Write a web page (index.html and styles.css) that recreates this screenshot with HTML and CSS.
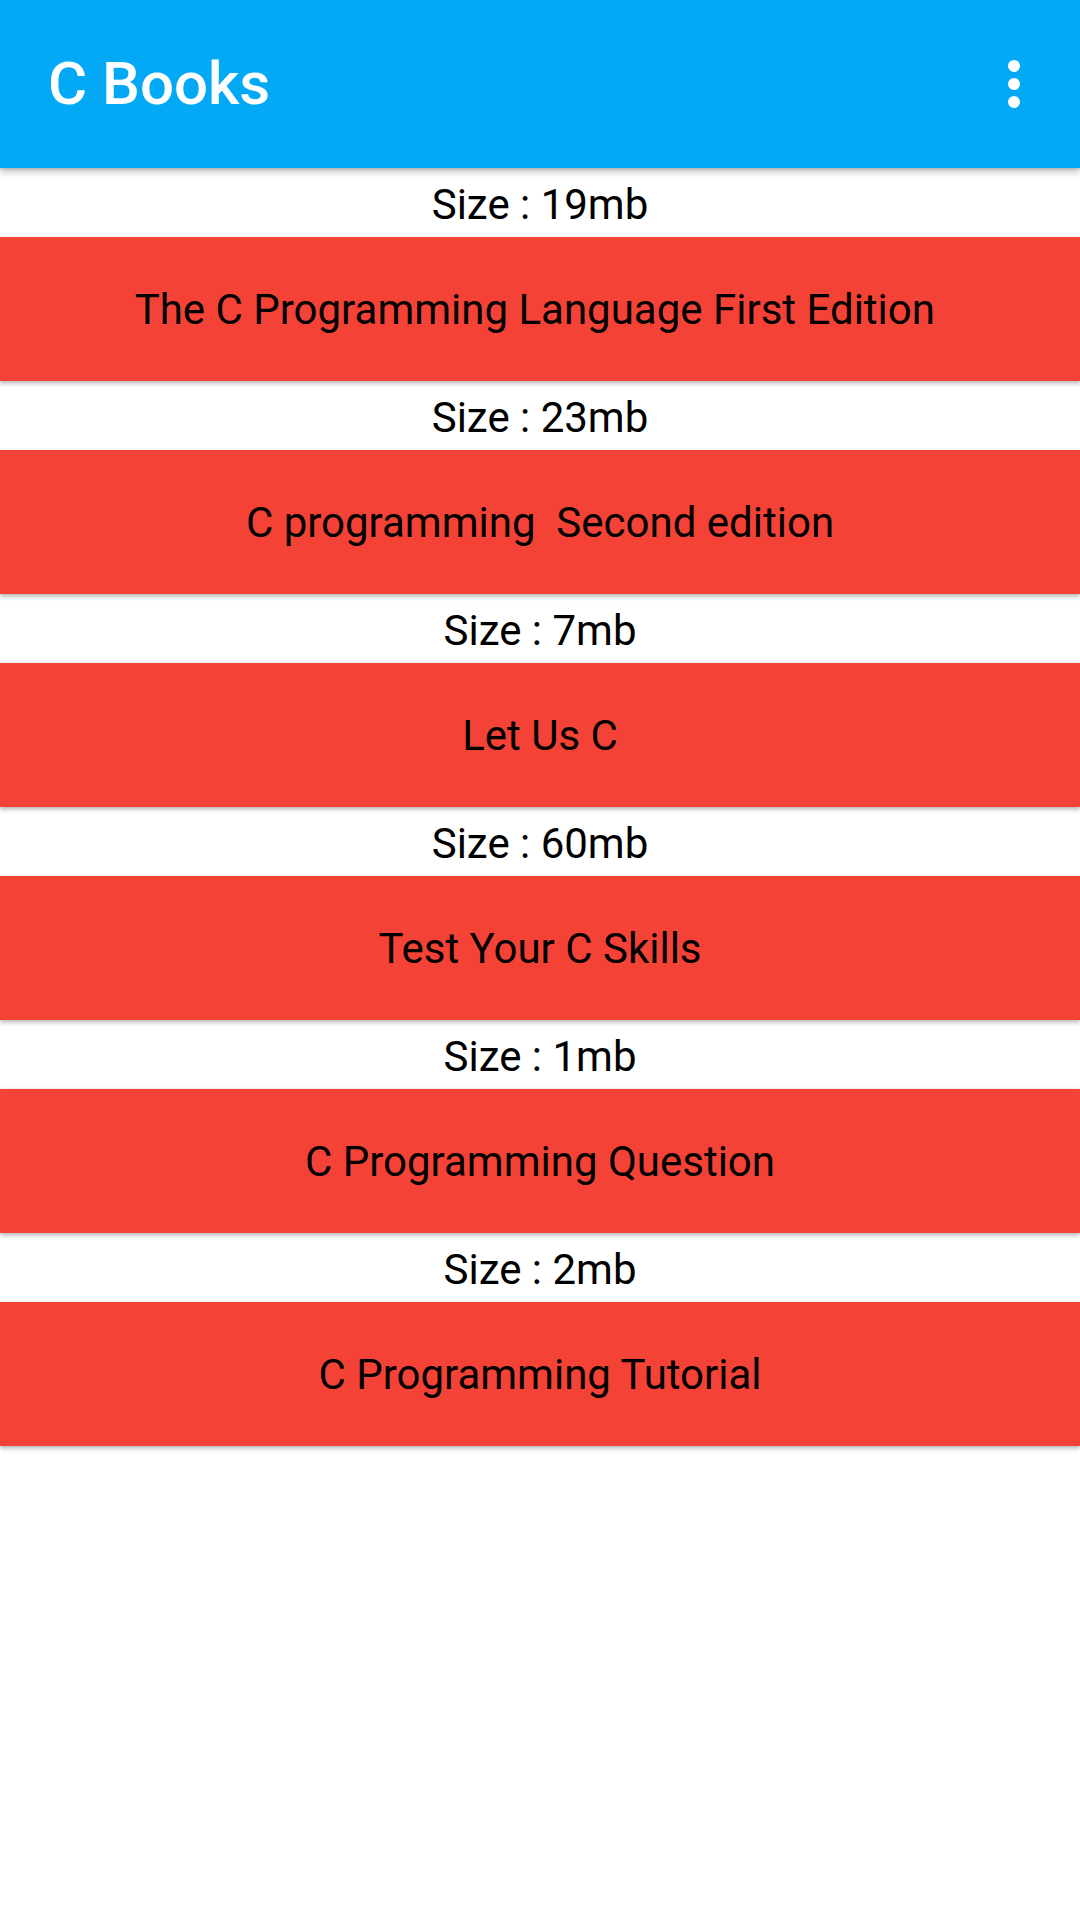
FILE: index.html
```html
<!DOCTYPE html>
<html>
<head>
<meta charset="utf-8">
<link rel="stylesheet" href="styles.css">
</head>
<body>
<header class="appbar">
  <div class="title">C Books</div>
  <svg class="overflow" width="72" height="72" viewBox="0 0 24 24"><circle cx="12" cy="6" r="2" fill="#fff"/><circle cx="12" cy="12" r="2" fill="#fff"/><circle cx="12" cy="18" r="2" fill="#fff"/></svg>
</header>
<main class="list">
  <div class="size">Size : 19mb</div>
  <div class="book">The C Programming Language First Edition&nbsp;</div>
  <div class="size">Size : 23mb</div>
  <div class="book">C programming&nbsp; Second edition</div>
  <div class="size">Size : 7mb</div>
  <div class="book">Let Us C</div>
  <div class="size">Size : 60mb</div>
  <div class="book">Test Your C Skills</div>
  <div class="size">Size : 1mb</div>
  <div class="book">C Programming Question</div>
  <div class="size">Size : 2mb</div>
  <div class="book">C Programming Tutorial</div>
</main>
</body>
</html>
```
FILE: styles.css
```css
html, body {
  margin: 0;
  padding: 0;
  background: #ffffff;
  width: 1080px;
  height: 1920px;
  overflow: hidden;
  font-family: Roboto, "Noto Sans", "Liberation Sans", sans-serif;
}

.appbar {
  height: 168px;
  background: #03A9F4;
  display: flex;
  align-items: center;
  justify-content: space-between;
  padding: 0 30px 0 48px;
  box-sizing: border-box;
  box-shadow: 0 4px 7px rgba(0, 0, 0, 0.24), 0 1px 3px rgba(0, 0, 0, 0.15);
  position: relative;
  z-index: 2;
}

.title {
  color: #ffffff;
  font-size: 60px;
  font-weight: 500;
  line-height: 1;
}

.overflow {
  display: block;
}

.list {
  display: flex;
  flex-direction: column;
}

.size {
  height: 69px;
  box-sizing: border-box;
  padding-top: 3px;
  display: flex;
  align-items: center;
  justify-content: center;
  font-size: 42px;
  color: #000000;
}

.book {
  height: 144px;
  background: #F44336;
  display: flex;
  align-items: center;
  justify-content: center;
  font-size: 42px;
  color: #000000;
  white-space: pre;
  box-shadow: 0 3px 4px rgba(0, 0, 0, 0.22), 0 0 3px rgba(0, 0, 0, 0.12);
  position: relative;
  z-index: 1;
}
```
